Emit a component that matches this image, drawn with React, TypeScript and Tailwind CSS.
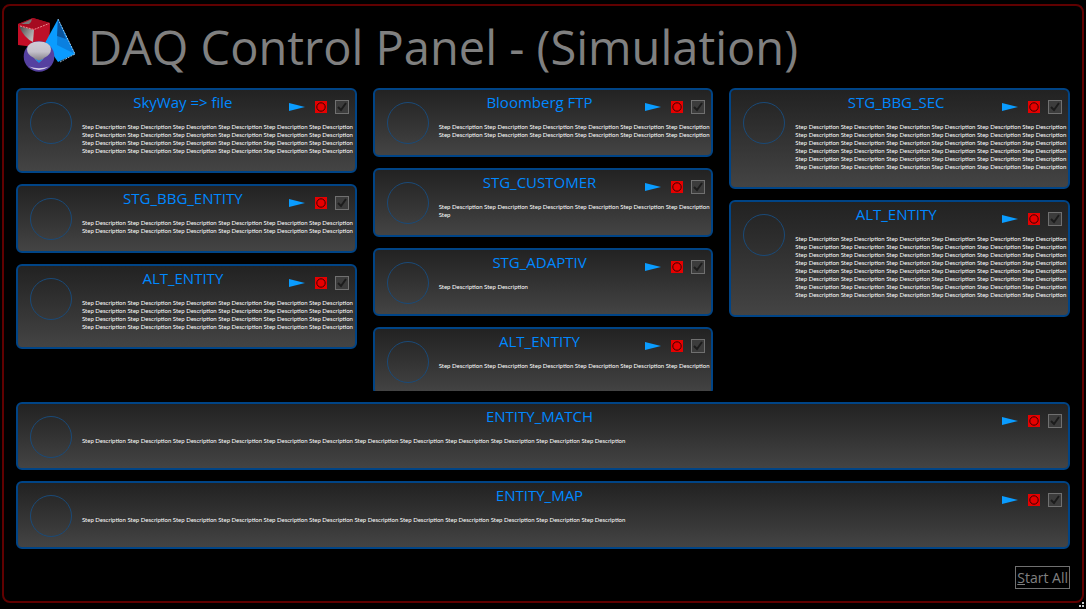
import React from "react";

type Step = { title: string; lines: string[] };

const phrase = (count: number) => Array(count).fill("Step Description").join(" ");
const full = (rows: number) => Array<string>(rows).fill(phrase(6));

const columns: Step[][] = [
  [
    { title: "SkyWay => file", lines: full(4) },
    { title: "STG_BBG_ENTITY", lines: full(2) },
    { title: "ALT_ENTITY", lines: full(4) },
  ],
  [
    { title: "Bloomberg FTP", lines: full(2) },
    { title: "STG_CUSTOMER", lines: [phrase(6), "Step"] },
    { title: "STG_ADAPTIV", lines: [phrase(2)] },
    { title: "ALT_ENTITY", lines: full(1) },
  ],
  [
    { title: "STG_BBG_SEC", lines: full(6) },
    { title: "ALT_ENTITY", lines: full(8) },
  ],
];

const wideSteps: Step[] = [
  { title: "ENTITY_MATCH", lines: [phrase(12)] },
  { title: "ENTITY_MAP", lines: [phrase(12)] },
];

function Logo() {
  return (
    <svg viewBox="0 0 60 54" className="h-[54px] w-[60px] shrink-0" aria-hidden="true">
      <defs>
        <linearGradient id="cubeShine" x1="0" y1="0" x2="1" y2="0.6">
          <stop offset="0" stopColor="#444" />
          <stop offset="1" stopColor="#bbb" />
        </linearGradient>
        <linearGradient id="ballShine" x1="0" y1="0" x2="0" y2="1">
          <stop offset="0" stopColor="#d0ccd6" />
          <stop offset="0.5" stopColor="#c4c0ca" />
          <stop offset="1" stopColor="#77747c" />
        </linearGradient>
      </defs>
      <g transform="translate(1 0)">
        <path d="M1 6 16 0 33 5 32 23 17 29 1 27Z" fill="#c40d26" />
        <path d="M1 6 16 0 33 5 17 11Z" fill="#a50b20" />
        <path d="M17 11 33 5 32 23 17 29Z" fill="#bd1029" />
        <path d="M4 6 15 1 14 4 12 6Z" fill="#777" />
        <path d="M2 8 17 12 16 24Q7 20 2 8Z" fill="url(#cubeShine)" />
        <path d="M3 8 17 11.5 32 5.5" fill="none" stroke="#eaa" strokeWidth="0.8" strokeDasharray="2 1" />
        <path d="M41 1 58 36 41 44 28 25Z" fill="#0a9cff" />
        <path d="M41 1 58 36 40 27Z" fill="#0a80e0" />
        <path d="M41 1 49 21 40 18Z" fill="#0b559d" />
        <path d="M41 1 58 36 43 44" fill="none" stroke="#bfe3ff" strokeWidth="0.8" strokeDasharray="2 1" />
        <circle cx="22" cy="38.5" r="15.3" fill="#5540a0" />
        <path d="M10 31Q11 23.5 22 23.5T34 31Q34 37 27 40Q24 44 22 44T17 40Q10 37 10 31Z" fill="url(#ballShine)" />
        <path d="M18 41 22 42.5 26 41 22 45Z" fill="#168eea" />
        <path d="M12 48.5Q22 55.5 32 48.5Q22 52 12 48.5Z" fill="#d4cee6" />
      </g>
    </svg>
  );
}

function StepCard({ step, id }: { step: Step; id: string }) {
  return (
    <section className="relative flex min-h-[68px] shrink-0 rounded-md border-2 border-[#004486] bg-linear-to-b from-[#222222] to-[#444444] pr-[7px] pl-3">
      <div className="mt-3 size-[42px] shrink-0 rounded-full border border-[#1a4a78]" />
      <div className="min-w-0 flex-1 pb-4 pl-2.5">
        <h2 className="-ml-16 text-center text-[15px] leading-6 text-[#0088ff]">{step.title}</h2>
        <p className="mt-[9px] font-[Lato] text-[6px] leading-2 whitespace-nowrap text-white">
          {step.lines.map((line, i) => (
            <span key={i} className="block">
              {line}
            </span>
          ))}
        </p>
      </div>
      <div className="absolute top-2.5 right-1.5 flex items-center">
        <button type="button" aria-label={`Run ${step.title}`}>
          <svg viewBox="0 0 16 10" className="h-2.5 w-4">
            <path d="M0 1 16 5 0 9Z" fill="#0a9cff" />
          </svg>
        </button>
        <button type="button" aria-label={`Stop ${step.title}`} className="ml-2.5">
          <svg viewBox="0 0 12 12" className="size-3">
            <path d="M0 0H12V12H0Z" fill="#e60000" />
            <circle cx="6" cy="6" r="4.2" fill="none" stroke="#3a0000" />
          </svg>
        </button>
        <label htmlFor={id} className="relative ml-2 block size-3.5">
          <input
            id={id}
            type="checkbox"
            defaultChecked
            aria-label={`Enable ${step.title}`}
            className="peer block size-3.5 appearance-none border border-[#707070] bg-[#3c3c3c]"
          />
          <svg viewBox="0 0 14 14" className="pointer-events-none absolute inset-0 hidden size-3.5 peer-checked:block">
            <path d="M3 7 6 10 11 3" fill="none" stroke="#1c1c1c" strokeWidth="2" />
          </svg>
        </label>
      </div>
    </section>
  );
}

export default function App() {
  return (
    <div className="relative flex h-screen flex-col bg-black px-0.5 pt-1 pb-1.5 font-['Open_Sans',sans-serif]">
      <main className="flex min-h-0 flex-1 flex-col rounded-lg border-2 border-[#600000] px-3 pb-3">
        <header className="flex h-[82px] shrink-0 items-start gap-3 pt-3">
          <Logo />
          <h1 className="pt-1.5 text-[47px] leading-none whitespace-nowrap text-[#808080]">
            DAQ Control Panel - (Simulation)
          </h1>
        </header>
        <div className="grid min-h-0 flex-1 grid-cols-3 gap-4 overflow-hidden">
          {columns.map((steps, c) => (
            <div key={c} className="flex min-w-0 flex-col gap-[11px]">
              {steps.map((step, i) => (
                <StepCard key={i} step={step} id={`step-${c}-${i}`} />
              ))}
            </div>
          ))}
        </div>
        <div className="mt-[11px] flex shrink-0 flex-col gap-[11px]">
          {wideSteps.map((step, i) => (
            <StepCard key={i} step={step} id={`wide-${i}`} />
          ))}
        </div>
        <footer className="mt-[17px] flex shrink-0 justify-end">
          <button type="button" className="h-[23px] border border-[#707070] px-px text-sm text-[#808080]">
            <span className="underline">S</span>tart All
          </button>
        </footer>
      </main>
      <svg viewBox="0 0 5 5" className="absolute right-0.5 bottom-0.5 size-[5px]" aria-hidden="true">
        <path d="M3 0H5V2H3ZM0 3H2V5H0ZM3 3H5V5H3Z" fill="#cccccc" />
      </svg>
    </div>
  );
}
